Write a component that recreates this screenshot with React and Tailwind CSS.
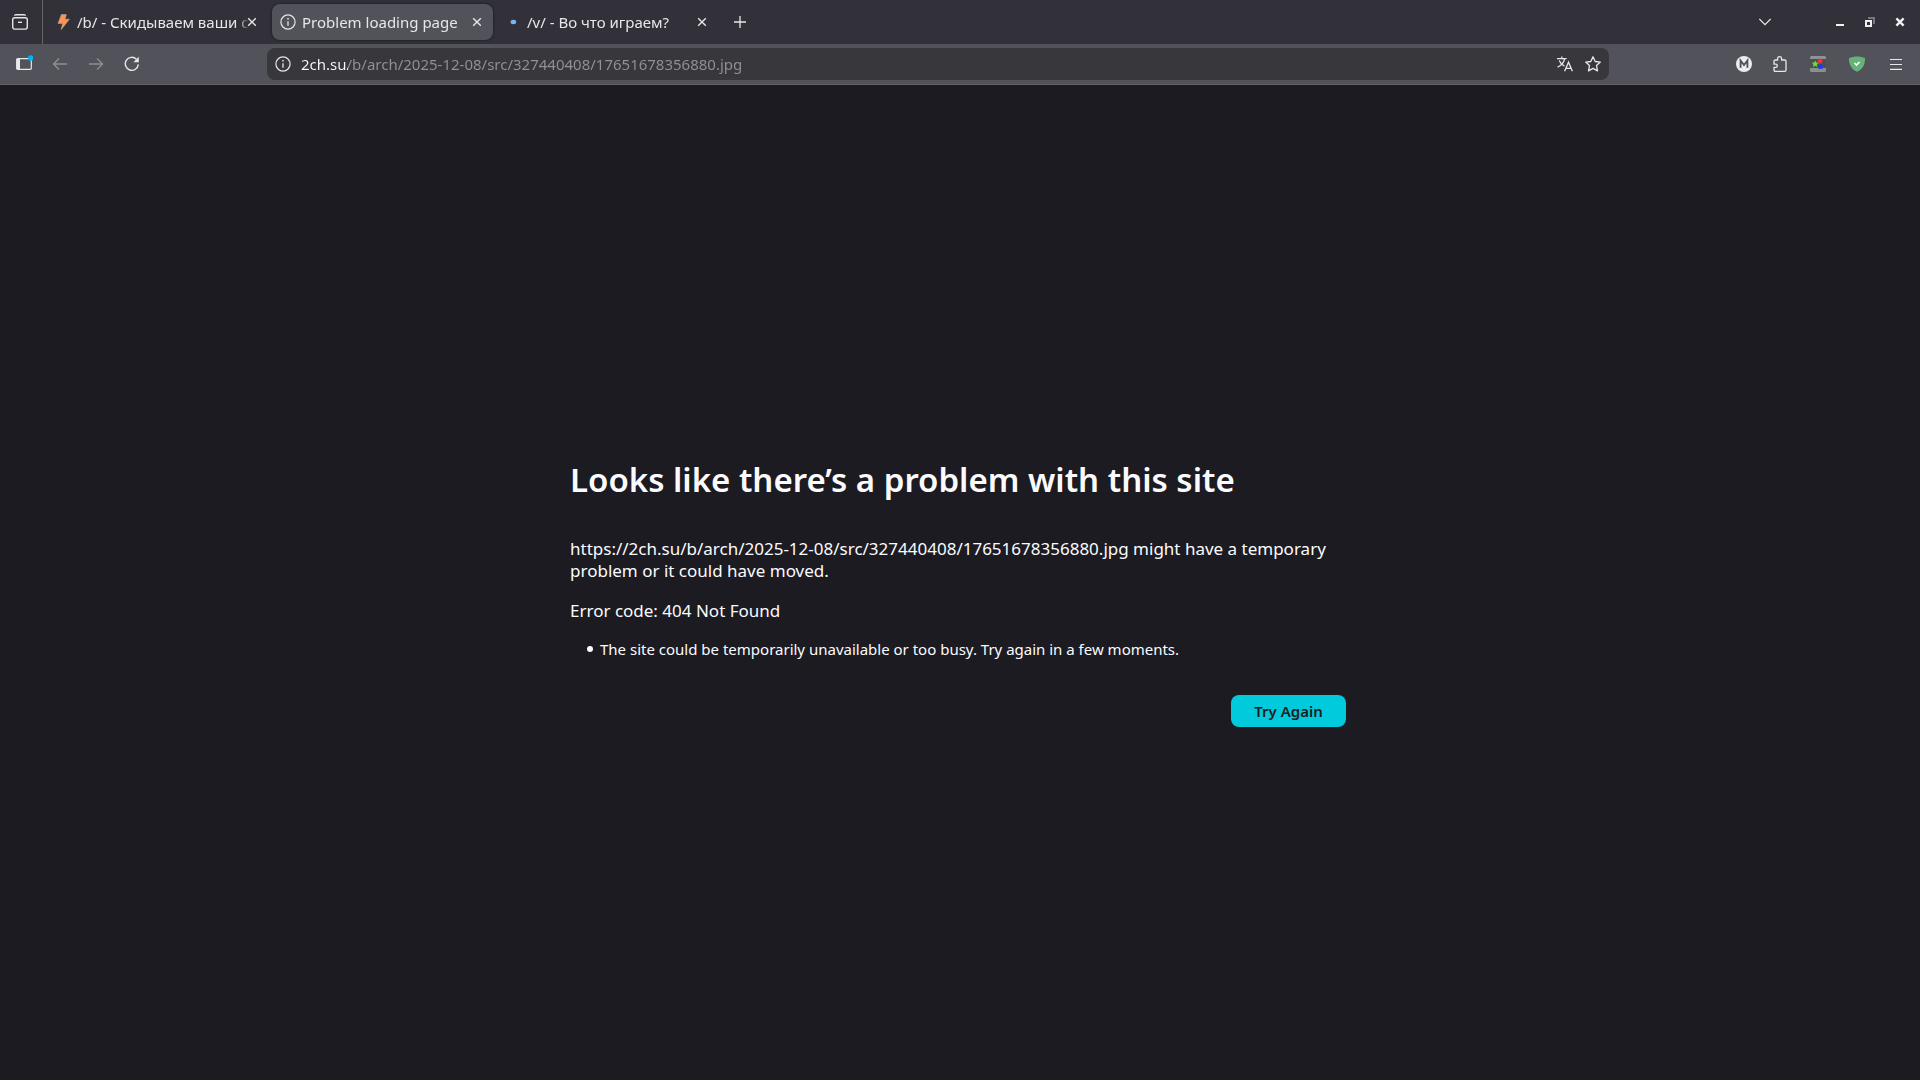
import React, { useState } from 'react'

const URL_PATH = '2ch.su/b/arch/2025-12-08/src/327440408/17651678356880.jpg'

function InfoIcon() {
  return (
    <svg width="16" height="16" viewBox="0 0 16 16" fill="none" stroke="currentColor" className="shrink-0">
      <circle cx="8" cy="8" r="7.1" strokeWidth="1.2" />
      <path d="M8 7.2v4.6" strokeWidth="1.3" />
      <path d="M8 4v1.6" strokeWidth="1.5" />
    </svg>
  )
}

function BoltIcon() {
  return (
    <svg width="16" height="16" viewBox="0 0 16 16" className="shrink-0">
      <path d="M6.4 0.6h5L10 5.2h4.4L6.2 15.6l1.4-6.2H3z" fill="#ff9350" stroke="#b9a49a" strokeWidth="0.6" />
    </svg>
  )
}

function LoadingIcon() {
  return (
    <svg width="16" height="16" viewBox="0 0 16 16" className="shrink-0">
      <ellipse cx="8.4" cy="8" rx="2.8" ry="2.2" fill="#75b8f5" />
    </svg>
  )
}

function CloseIcon() {
  return (
    <svg width="10" height="10" viewBox="0 0 10 10" fill="none" stroke="currentColor" strokeWidth="1.4">
      <path d="M1.2 1.2l7.6 7.6M8.8 1.2L1.2 8.8" />
    </svg>
  )
}

const tabs = [
  { id: 1, title: '/b/ - Скидываем ваши с', icon: <BoltIcon /> },
  { id: 2, title: 'Problem loading page', icon: <InfoIcon /> },
  { id: 3, title: '/v/ - Во что играем?', icon: <LoadingIcon /> }
]

function Tab({ tab, active, onSelect }) {
  return (
    <div className={`flex h-9 w-[221px] items-center rounded-lg pl-2 pr-1.5 ${active ? 'bg-[#52525a] shadow-[0_0_3px_rgba(0,0,0,0.6)]' : ''}`}>
      <button onClick={onSelect} className="flex min-w-0 flex-1 items-center gap-1.5 text-left">
        {tab.icon}
        <span className="flex-1 whitespace-nowrap [mask-image:linear-gradient(to_left,transparent,black_10px)]">{tab.title}</span>
      </button>
      <button aria-label="Close tab" className="flex size-5 shrink-0 items-center justify-center">
        <CloseIcon />
      </button>
    </div>
  )
}

function ToolButton({ label, dim, children }) {
  return (
    <button aria-label={label} className={`flex h-8 w-9 shrink-0 items-center justify-center ${dim ? 'text-[#8e8e93]' : 'text-[#e8e8ea]'}`}>
      {children}
    </button>
  )
}

function TabBar() {
  const [selected, setSelected] = useState(2)

  return (
    <div className="flex h-11 items-center bg-[#32313a] text-[#e6e6ea]">
      <button aria-label="Recent browsing" className="flex h-11 w-[43px] items-center justify-center border-r border-[#65656c]">
        <svg width="16" height="16" viewBox="0 0 16 16" fill="none" stroke="currentColor" strokeWidth="1.4" className="mr-0.5">
          <path d="M2.8 1.2c.3-.4.7-.5 1.2-.5h8c.5 0 .9.1 1.2.5" strokeLinecap="round" />
          <rect x="0.7" y="3.7" width="14.6" height="11.4" rx="2" />
          <path d="M6 8.3h4" />
        </svg>
      </button>
      <div className="ml-1 flex gap-1">
        {tabs.map((tab) => (
          <Tab key={tab.id} tab={tab} active={tab.id === selected} onSelect={() => setSelected(tab.id)} />
        ))}
      </div>
      <button aria-label="New tab" className="ml-1 flex h-9 w-9 items-center justify-center">
        <svg width="12" height="12" viewBox="0 0 12 12" stroke="currentColor" strokeWidth="1.3">
          <path d="M6 0v12M0 6h12" />
        </svg>
      </button>
      <div className="flex-1" />
      <button aria-label="List all tabs" className="mr-[42px] flex h-9 w-9 items-center justify-center">
        <svg width="12" height="12" viewBox="0 0 12 12" fill="none" stroke="currentColor" strokeWidth="1.3">
          <path d="M0.3 3l5.7 5.7L11.7 3" />
        </svg>
      </button>
      <div className="flex pr-[5px]">
        <button aria-label="Minimize" className="flex h-9 w-[30px] items-center justify-center">
          <svg width="10" height="10" viewBox="0 0 10 10" fill="#f0f0f2">
            <path d="M1 7h8v2H1z" />
          </svg>
        </button>
        <button aria-label="Restore" className="flex h-9 w-[30px] items-center justify-center">
          <svg width="10" height="10" viewBox="0 0 10 10" fill="none" strokeWidth="2">
            <path d="M3 1h6v6" stroke="#77777e" />
            <path d="M1 4h5v5H1z" stroke="#f0f0f2" />
          </svg>
        </button>
        <button aria-label="Close window" className="flex h-9 w-[30px] items-center justify-center">
          <svg width="10" height="10" viewBox="0 0 10 10" fill="none" stroke="#f0f0f2" strokeWidth="2.4">
            <path d="M1.4 1.4l7.2 7.2M8.6 1.4L1.4 8.6" />
          </svg>
        </button>
      </div>
    </div>
  )
}

function NavBar() {
  const [url, setUrl] = useState(URL_PATH)

  return (
    <div className="flex h-[41px] items-start border-b border-[#5e6266] bg-[#52525a] px-1.5 pt-1 text-[#e8e8ea]">
      <ToolButton label="Sidebars">
        <svg width="18" height="18" viewBox="0 0 18 18" fill="none" stroke="currentColor">
          <rect x="1.7" y="3.7" width="14.6" height="10.6" rx="1" strokeWidth="1.2" />
          <path d="M1.5 4h3.5v10H1.500z" fill="currentColor" stroke="none" />
          <circle cx="15.700" cy="3" r="2.800" fill="#00b3f4" stroke="none" />
        </svg>
      </ToolButton>
      <ToolButton label="Back" dim>
        <svg width="16" height="16" viewBox="0 0 16 16" fill="none" stroke="currentColor" strokeWidth="1.3">
          <path d="M15 8H1.5M7 2.5L1.5 8L7 13.5" />
        </svg>
      </ToolButton>
      <ToolButton label="Forward" dim>
        <svg width="16" height="16" viewBox="0 0 16 16" fill="none" stroke="currentColor" strokeWidth="1.3">
          <path d="M1 8h13.5M9 2.5L14.5 8L9 13.5" />
        </svg>
      </ToolButton>
      <ToolButton label="Reload">
        <svg width="16" height="16" viewBox="0 0 16 16" fill="none" stroke="currentColor" strokeWidth="1.4">
          <path d="M14.3 8.4A6.5 6.5 0 1 1 12.4 3.2" />
          <path d="M14.8 0.8v5.4H9.4z" fill="currentColor" stroke="none" />
        </svg>
      </ToolButton>
      <div className="mx-[117px] flex h-8 flex-1 items-center rounded-lg bg-[#38373c] pl-2 pr-0.5">
        <InfoIcon />
        <input
          aria-label="Address"
          value={url}
          onChange={(e) => setUrl(e.target.value)}
          className="ml-2.5 h-8 min-w-0 flex-1 bg-linear-to-r from-[#fbfbfe] from-[47px] to-[#919196] to-[47px] bg-clip-text text-transparent outline-none"
        />
        <button aria-label="Translate this page" className="flex h-7 w-7 items-center justify-center">
          <svg width="16" height="16" viewBox="0 0 16 16" fill="none" stroke="currentColor" strokeWidth="1.3">
            <path d="M0 2.6h9.6M4.8 0.4v2.2M7.6 2.8C6.8 6.4 4.2 9.4 0.6 11.2M2.2 4.6c1 2.4 2.8 4.4 5.2 5.6" />
            <path d="M7.6 15.2L11.5 6.2L15.4 15.2M8.9 12.4h5.2" />
          </svg>
        </button>
        <button aria-label="Bookmark this page" className="flex h-7 w-7 items-center justify-center">
          <svg width="16" height="16" viewBox="0 0 16 16" fill="none" stroke="currentColor" strokeWidth="1.3" strokeLinejoin="round">
            <path d="M8 0.8l2.200 4.700 5.100.6-3.800 3.500 1 5.300L8 12.400l-4.500 2.500 1-5.300L.7 6.100l5.100-.6z" />
          </svg>
        </button>
      </div>
      <ToolButton label="Account">
        <svg width="16" height="16" viewBox="0 0 16 16">
          <circle cx="8" cy="8" r="8" fill="#ededf0" />
          <path d="M4.6 11.8V4.600L8 9L11.400 4.600v7.200" fill="none" stroke="#52525a" strokeWidth="1.9" />
        </svg>
      </ToolButton>
      <ToolButton label="Extensions">
        <svg width="16" height="16" viewBox="0 0 16 16" fill="none" stroke="currentColor" strokeWidth="1.3" strokeLinejoin="round">
          <path d="M5.600 4V2.700a2 2 0 0 1 4 0V4h3.200a1.200 1.200 0 0 1 1.200 1.200v8.900a1.200 1.200 0 0 1-1.200 1.200H3.200A1.200 1.200 0 0 1 2 14.100v-2.700h1.700a1.600 1.600 0 0 0 0-3.200H2V5.200A1.200 1.200 0 0 1 3.200 4z" />
        </svg>
      </ToolButton>
      <div className="flex pl-0.5">
        <button aria-label="Saved images" className="flex h-8 w-9 items-center justify-center">
          <svg width="16" height="16" viewBox="0 0 16 16">
            <rect width="16" height="16" rx="1.5" fill="#4d5052" />
            <path d="M1.500 0h13a1.500 1.500 0 0 1 1.500 1.500V3H0V1.500A1.500 1.500 0 0 1 1.500 0z" fill="#8f9393" />
            <path d="M0 12h16v2.500a1.500 1.500 0 0 1-1.500 1.500h-13A1.500 1.500 0 0 1 0 14.500z" fill="#8b8f90" />
            <path d="M5.200 4.600l1 2 2.200.2-1.500 1.700.6 2.400-2.300-1.100-2.100 1.300.2-2.500L1.900 6.700l2.400-.2z" fill="#62e02c" />
            <path d="M10 2l1 1.800 2.200.3-1.400 1.700.4 2.200L10 7.100 8 8l.3-2.200L6.900 4.200 9 3.800z" fill="#f23535" />
            <path d="M10.600 7.200l1 1.900 2.200.3-1.500 1.700.4 2.400-2.100-1.100-2.100 1.100.3-2.400-1.500-1.700 2.200-.3z" fill="#2038ee" />
          </svg>
        </button>
        <button aria-label="Protection" className="flex h-8 w-[42px] items-center justify-center">
          <svg width="16" height="16" viewBox="0 0 16 16">
            <path d="M8 0.400c2.700 0 5.500.6 8 1.600 0 5-.8 10.400-8 13.800C.8 12.400 0 7 0 2 2.500 1 5.300.4 8 .4z" fill="#67b279" />
            <path d="M5.500 7l2 2 3-3" fill="none" stroke="#fff" strokeWidth="1.600" />
          </svg>
        </button>
        <ToolButton label="Open application menu">
          <svg width="12" height="12" viewBox="0 0 12 12" stroke="currentColor" strokeWidth="1.200">
            <path d="M0 1.500h12M0 6.500h12M0 11.400h12" />
          </svg>
        </ToolButton>
      </div>
    </div>
  )
}

export default function App() {
  return (
    <div className="flex min-h-screen flex-col bg-[#1c1b22] font-['Noto_Sans',sans-serif] text-[15px] leading-5">
      <TabBar />
      <NavBar />
      <main className="flex flex-1 flex-col items-center justify-center px-12 pt-[22px] text-[#fbfbfe]">
        <div className="w-full max-w-[780px]">
          <h1 className="text-[33px] font-semibold leading-10">Looks like there’s a problem with this site</h1>
          <p className="mt-[38px] text-[17px] leading-[22px]">
            {`https://${URL_PATH} might have a temporary problem or it could have moved.`}
          </p>
          <p className="mt-[18px] text-[17px] leading-[22px]">Error code: 404 Not Found</p>
          <ul className="mt-[17px] pl-[17px]">
            <li className="flex items-center gap-[7px] before:size-1.5 before:shrink-0 before:rounded-full before:bg-[#fbfbfe]">
              The site could be temporarily unavailable or too busy. Try again in a few moments.
            </li>
          </ul>
          <div className="mt-9 flex justify-end pr-1">
            <button className="h-8 w-[115px] rounded-lg bg-[#00cadb] font-semibold text-[#1c1b22]">Try Again</button>
          </div>
        </div>
      </main>
    </div>
  )
}
